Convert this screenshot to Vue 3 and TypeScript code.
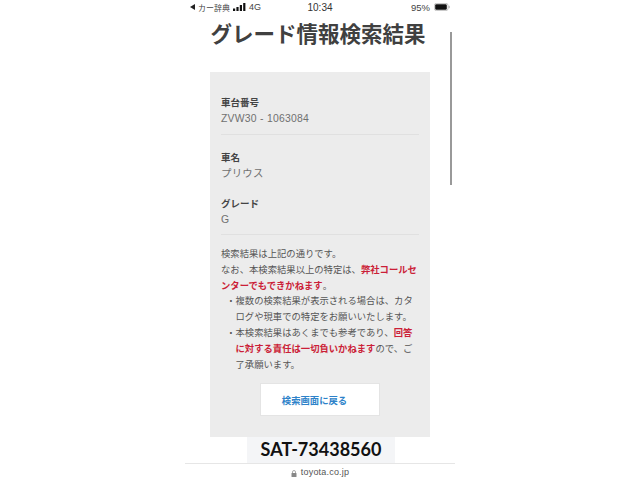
<script setup lang="ts">
const fields = [
  { label: '車台番号', value: 'ZVW30 - 1063084', rule: true },
  { label: '車名', value: 'プリウス', rule: false },
  { label: 'グレード', value: 'G', rule: true },
]
</script>

<template>
  <div class="screen">
    <div class="status">
      <div class="status-left">
        <span class="back"></span>
        <span>カー辞典</span>
        <svg class="signal" width="13" height="8" viewBox="0 0 13 8">
          <rect x="0" y="5.5" width="2.2" height="2.5" />
          <rect x="3.4" y="4" width="2.2" height="4" />
          <rect x="6.8" y="2" width="2.2" height="6" />
          <rect x="10.2" y="0" width="2.2" height="8" />
        </svg>
        <span class="net">4G</span>
      </div>
      <div class="status-time">10:34</div>
      <div class="status-right">
        <span>95%</span>
        <svg width="16" height="8" viewBox="0 0 16 8">
          <rect x="0.4" y="0.4" width="13.6" height="7.2" rx="2" fill="none" stroke="#aaa" stroke-width="0.7" />
          <rect x="1.2" y="1.2" width="11.6" height="5.6" rx="1.2" fill="#111" />
          <rect x="14.6" y="2.8" width="1" height="2.4" fill="#aaa" />
        </svg>
      </div>
    </div>

    <h1 class="title">グレード情報検索結果</h1>

    <main class="panel">
      <section v-for="f in fields" :key="f.label" class="field" :class="{ ruled: f.rule }">
        <div class="label">{{ f.label }}</div>
        <div class="value">{{ f.value }}</div>
      </section>

      <div class="notes">
        <p>検索結果は上記の通りです。</p>
        <p>なお、本検索結果以上の特定は、<b>弊社コールセンターでもできかねます</b>。</p>
        <ul>
          <li>複数の検索結果が表示される場合は、カタログや現車での特定をお願いいたします。</li>
          <li>本検索結果はあくまでも参考であり、<b>回答に対する責任は一切負いかねます</b>ので、ご了承願います。</li>
        </ul>
      </div>

      <a class="back-btn">検索画面に戻る</a>
    </main>

    <footer class="url">
      <svg width="6" height="7" viewBox="0 0 6 7">
        <path d="M1.5 3V2a1.5 1.5 0 0 1 3 0v1" fill="none" stroke="#888" stroke-width="0.7" />
        <rect x="0.5" y="3" width="5" height="4" rx="0.6" fill="#888" />
      </svg>
      <span>toyota.co.jp</span>
    </footer>

    <div class="scrollbar"></div>
    <div class="stock">SAT-73438560</div>
  </div>
</template>

<style>
html, body { margin: 0; background: #fff; }
</style>

<style scoped>
.screen {
  position: relative;
  width: 270px;
  height: 480px;
  margin-left: 185px;
  display: flex;
  flex-direction: column;
  overflow: hidden;
  font-family: "Noto Sans CJK JP", "Noto Sans", sans-serif;
  color: #555;
  background: #fff;
}
.status {
  height: 14px;
  padding: 0 5px;
  display: grid;
  grid-template-columns: 1fr auto 1fr;
  align-items: center;
  font-family: "Liberation Sans", "Noto Sans CJK JP", sans-serif;
  font-size: 8px;
  color: #444;
}
.status-left { display: flex; align-items: center; gap: 3px; }
.net { font-size: 9px; }
.back {
  border-style: solid;
  border-width: 3px 5px 3px 0;
  border-color: transparent #222 transparent transparent;
}
.signal { fill: #111; }
.status-time { font-size: 10px; color: #333; margin-left: 2px; padding-right: 2px; }
.status-right { display: flex; justify-content: flex-end; align-items: center; gap: 4px; font-size: 9.5px; }
.title {
  margin: 5px 0 0;
  height: 27px;
  padding-right: 4px;
  line-height: 27px;
  font-size: 21.5px;
  font-weight: 700;
  text-align: center;
  color: #404040;
  white-space: nowrap;
}
.panel {
  margin: 26px 25px 0;
  height: 365px;
  box-sizing: border-box;
  padding: 23px 11px 0;
  background: #ececec;
  font-size: 9.5px;
}
.field + .field { margin-top: 14px; }
.field.ruled { padding-bottom: 6.5px; border-bottom: 1px solid #e0e0e0; }
.field.ruled + .field { margin-top: 15px; }
.label { font-weight: 700; line-height: 14px; color: #444; }
.value {
  line-height: 16px;
  margin-top: 2px;
  font-family: "Liberation Sans", "Noto Sans CJK JP", sans-serif;
  font-size: 10.4px;
  letter-spacing: 0.25px;
  color: #707070;
}
.notes {
  margin-top: 11px;
  line-height: 15.8px;
  font-size: 9.33px;
  color: #555;
}
.notes p { margin: 0; }
.notes b { color: #cb1f38; font-weight: 700; }
.notes ul { margin: 0; padding: 0 0 0 14.5px; list-style: none; }
.notes li::before {
  content: "・";
  display: inline-block;
  width: 9.33px;
  margin-left: -9.33px;
}
.back-btn {
  display: flex;
  align-items: center;
  justify-content: center;
  width: 120px;
  height: 33px;
  margin: 11px auto 0;
  padding-right: 11px;
  background: #fff;
  border: 1px solid #e4e4e4;
  box-sizing: border-box;
  font-size: 9.33px;
  font-weight: 700;
  color: #2d82c9;
}
.url {
  margin-top: 26px;
  border-top: 1px solid #e6e6e6;
  flex: 1;
  display: flex;
  align-items: flex-start;
  justify-content: center;
  gap: 4px;
  padding-top: 3px;
  font-family: "Liberation Sans", sans-serif;
  font-size: 9px;
  letter-spacing: 0.2px;
  color: #555;
}
.url svg { margin-top: 3px; }
.scrollbar {
  position: absolute;
  left: 265px;
  top: 32px;
  width: 2px;
  height: 153px;
  background: #999;
}
.stock {
  position: absolute;
  left: 62px;
  top: 437px;
  width: 148px;
  height: 26px;
  padding-bottom: 2px;
  box-sizing: border-box;
  background: #f4f5f7;
  display: flex;
  align-items: center;
  justify-content: center;
  font-family: Lato, sans-serif;
  font-size: 18px;
  font-weight: 700;
  color: #111;
}
</style>
